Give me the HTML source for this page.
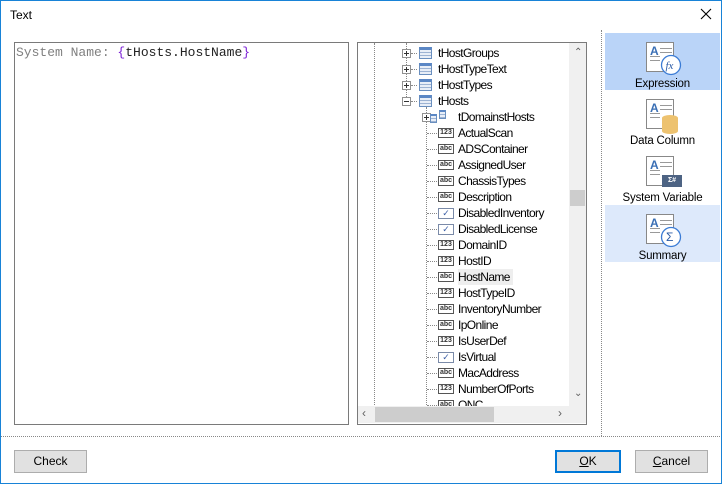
<!DOCTYPE html>
<html><head><style>
*{margin:0;padding:0;box-sizing:border-box}
body{width:722px;height:484px;background:#fff;font-family:"Liberation Sans",sans-serif;font-size:12px;color:#000;position:relative;overflow:hidden}
.win{position:absolute;left:0;top:0;width:722px;height:484px;border:1px solid #1883d7}
.abs{position:absolute}
.row{position:absolute;height:16px;line-height:16px;font-size:12px;letter-spacing:-0.6px;white-space:nowrap}
.exp{position:absolute;width:9px;height:9px;border:1px solid #919191;background:#fff}
.exp:before{content:"";position:absolute;left:1px;top:3px;width:5px;height:1px;background:#333}
.exp.p:after{content:"";position:absolute;left:3px;top:1px;width:1px;height:5px;background:#333}
.tbl{position:absolute;width:13px;height:12px;border:1px solid #6a8fbf;background:repeating-linear-gradient(#e8eef7 0 2px,#9db3d3 2px 3px);border-top:3px solid #5b87c5}
.ti{position:absolute;width:16px;height:10px;border:1px solid #555;font-size:7px;line-height:8px;text-align:center;font-weight:bold;color:#333;background:#fff}
.ck{position:absolute;width:16px;height:11px;border:1px solid #7a8aa8;color:#3c5fa6;font-size:9px;line-height:9px;text-align:center;background:#fff}
.hd{position:absolute;height:0;border-top:1px dotted #888}
.vd{position:absolute;width:0;border-left:1px dotted #888}
.btn{position:absolute;height:23px;border:1px solid #adadad;background:#e1e1e1;text-align:center;line-height:21px;font-size:12px}
.item{position:absolute;left:605px;width:115px;height:57px;text-align:center}
.item .lbl{position:absolute;left:0;right:0;top:44px;font-size:11.5px;line-height:14px;letter-spacing:-0.2px}
.ico{position:absolute;left:41px;top:9px;width:28px;height:30px;border:1px solid #888;background:#fff}
.ico b{position:absolute;left:3px;top:1px;font-size:12px;color:#3a6fb5}
.ico i{position:absolute;left:13px;height:1px;width:12px;background:#999}
</style></head><body>
<div class="win"></div>
<div class="abs" style="left:10px;top:8px;font-size:12px">Text</div>
<svg class="abs" style="left:700px;top:8px" width="12" height="12"><path d="M1 1L11 11M11 1L1 11" stroke="#000" stroke-width="1.1"/></svg>

<div class="abs" style="left:14px;top:42px;width:335px;height:383px;border:1px solid #7a7a7a"></div>
<div class="abs" style="left:16px;top:45px;font-family:'Liberation Mono',monospace;font-size:13px;color:#808080;white-space:pre">System Name: <span style="color:#7b1fd6">{</span><span style="color:#222">tHosts.HostName</span><span style="color:#7b1fd6">}</span></div>

<div class="abs" style="left:357px;top:42px;width:230px;height:383px;border:1px solid #7a7a7a;overflow:hidden">
<div class="vd" style="left:16px;top:0;height:380px"></div>
<div class="vd" style="left:48px;top:0;height:60px"></div>
<div class="vd" style="left:68px;top:64px;height:300px"></div>
</div>
<div id="tree"></div>
<div class="abs" style="left:569px;top:43px;width:17px;height:363px;background:#f0f0f0"></div>
<div class="abs" style="left:570px;top:190px;width:15px;height:16px;background:#cdcdcd"></div>
<div class="abs" style="left:574px;top:47px;font-size:10px;color:#606060">&#8963;</div>
<div class="abs" style="left:574px;top:388px;font-size:10px;color:#606060">&#8964;</div>
<div class="abs" style="left:358px;top:406px;width:211px;height:17px;background:#f0f0f0"></div>
<div class="abs" style="left:375px;top:407px;width:119px;height:15px;background:#cdcdcd"></div>
<div class="abs" style="left:362px;top:406px;font-size:12px;color:#606060">&lsaquo;</div>
<div class="abs" style="left:558px;top:406px;font-size:12px;color:#606060">&rsaquo;</div>
<div class="abs" style="left:569px;top:406px;width:17px;height:17px;background:#f0f0f0"></div>

<div class="vd" style="left:601px;top:30px;height:406px"></div>
<div class="hd" style="left:1px;top:436px;width:719px"></div>
<div class="item" style="top:33px;background:#bad4f8"><div class="ico"><b>A</b><i style="top:5px"></i><i style="top:9px"></i><i style="top:13px;left:3px;width:10px"></i><i style="top:17px;left:3px;width:10px"></i></div>
<svg class="abs" style="left:55px;top:21px" width="22" height="22"><circle cx="11" cy="11" r="9.5" fill="#fff" stroke="#3a7bd5" stroke-width="1.3"/><text x="5.5" y="15" font-size="11" font-style="italic" fill="#2a5aa5" font-family="Liberation Serif">fx</text></svg>
<div class="lbl">Expression</div></div>
<div class="item" style="top:90px"><div class="ico"><b>A</b><i style="top:5px"></i><i style="top:9px"></i><i style="top:13px;left:3px;width:10px"></i><i style="top:17px;left:3px;width:10px"></i></div>
<div class="abs" style="left:57px;top:25px;width:16px;height:19px;background:#edc26f;border-radius:8px/3px"></div>
<div class="lbl">Data Column</div></div>
<div class="item" style="top:147px"><div class="ico"><b>A</b><i style="top:5px"></i><i style="top:9px"></i><i style="top:13px;left:3px;width:10px"></i><i style="top:17px;left:3px;width:10px"></i></div>
<div class="abs" style="left:57px;top:28px;width:20px;height:12px;background:#4d6383;color:#fff;font-size:7px;line-height:12px;font-weight:bold">Σ#</div>
<div class="lbl">System Variable</div></div>
<div class="item" style="top:205px;background:#dde9fb"><div class="ico"><b>A</b><i style="top:5px"></i><i style="top:9px"></i><i style="top:13px;left:3px;width:10px"></i><i style="top:17px;left:3px;width:10px"></i></div>
<svg class="abs" style="left:55px;top:21px" width="22" height="22"><circle cx="11" cy="11" r="9.5" fill="#fff" stroke="#3a7bd5" stroke-width="1.3"/><text x="6" y="15" font-size="12" fill="#2a5aa5" font-family="Liberation Sans">Σ</text></svg>
<div class="lbl">Summary</div></div>

<div class="btn" style="left:14px;top:450px;width:73px">Check</div>
<div class="btn" style="left:555px;top:450px;width:66px;border:2px solid #0078d7;line-height:19px"><u>O</u>K</div>
<div class="btn" style="left:635px;top:450px;width:73px"><u>C</u>ancel</div>

<script>
var t=document.getElementById('tree'),h='';
var L1=['tHostGroups','tHostTypeText','tHostTypes','tHosts'];
L1.forEach(function(n,i){var y=45+i*16;
h+='<div class="exp'+(i<3?' p':'')+'" style="left:402px;top:'+(y+4)+'px"></div><div class="hd" style="left:411px;top:'+(y+8)+'px;width:6px"></div><div class="tbl" style="left:419px;top:'+(y+2)+'px"></div><div class="row" style="left:438px;top:'+y+'px">'+n+'</div>';});
var y=45+64;
h+='<div class="exp p" style="left:422px;top:'+(y+4)+'px"></div><div class="tbl" style="left:430px;top:'+(y+5)+'px;width:7px;height:9px;border-top-width:2px"></div><div class="tbl" style="left:439px;top:'+(y+1)+'px;width:7px;height:9px;border-top-width:2px"></div><div class="row" style="left:458px;top:'+y+'px">tDomainstHosts</div>';
var F=[['ActualScan','n'],['ADSContainer','a'],['AssignedUser','a'],['ChassisTypes','a'],['Description','a'],['DisabledInventory','c'],['DisabledLicense','c'],['DomainID','n'],['HostID','n'],['HostName','a'],['HostTypeID','n'],['InventoryNumber','a'],['IpOnline','a'],['IsUserDef','n'],['IsVirtual','c'],['MacAddress','a'],['NumberOfPorts','n'],['ONC','a']];
F.forEach(function(f,i){var y=45+80+i*16;if(y>398)return;
var ic=f[1]=='c'?'<div class="ck" style="left:438px;top:'+(y+3)+'px">&#10003;</div>':'<div class="ti" style="left:438px;top:'+(y+3)+'px">'+(f[1]=='n'?'123':'abc')+'</div>';
h+='<div class="hd" style="left:427px;top:'+(y+8)+'px;width:10px"></div>'+ic+'<div class="row" style="left:458px;top:'+y+'px;'+(f[0]=='HostName'?'background:#eee;padding-right:3px':'')+'">'+f[0]+'</div>';});
t.innerHTML='<div class="abs" style="left:0;top:0;width:569px;height:406px;overflow:hidden">'+h+'</div>';
</script>
</body></html>
